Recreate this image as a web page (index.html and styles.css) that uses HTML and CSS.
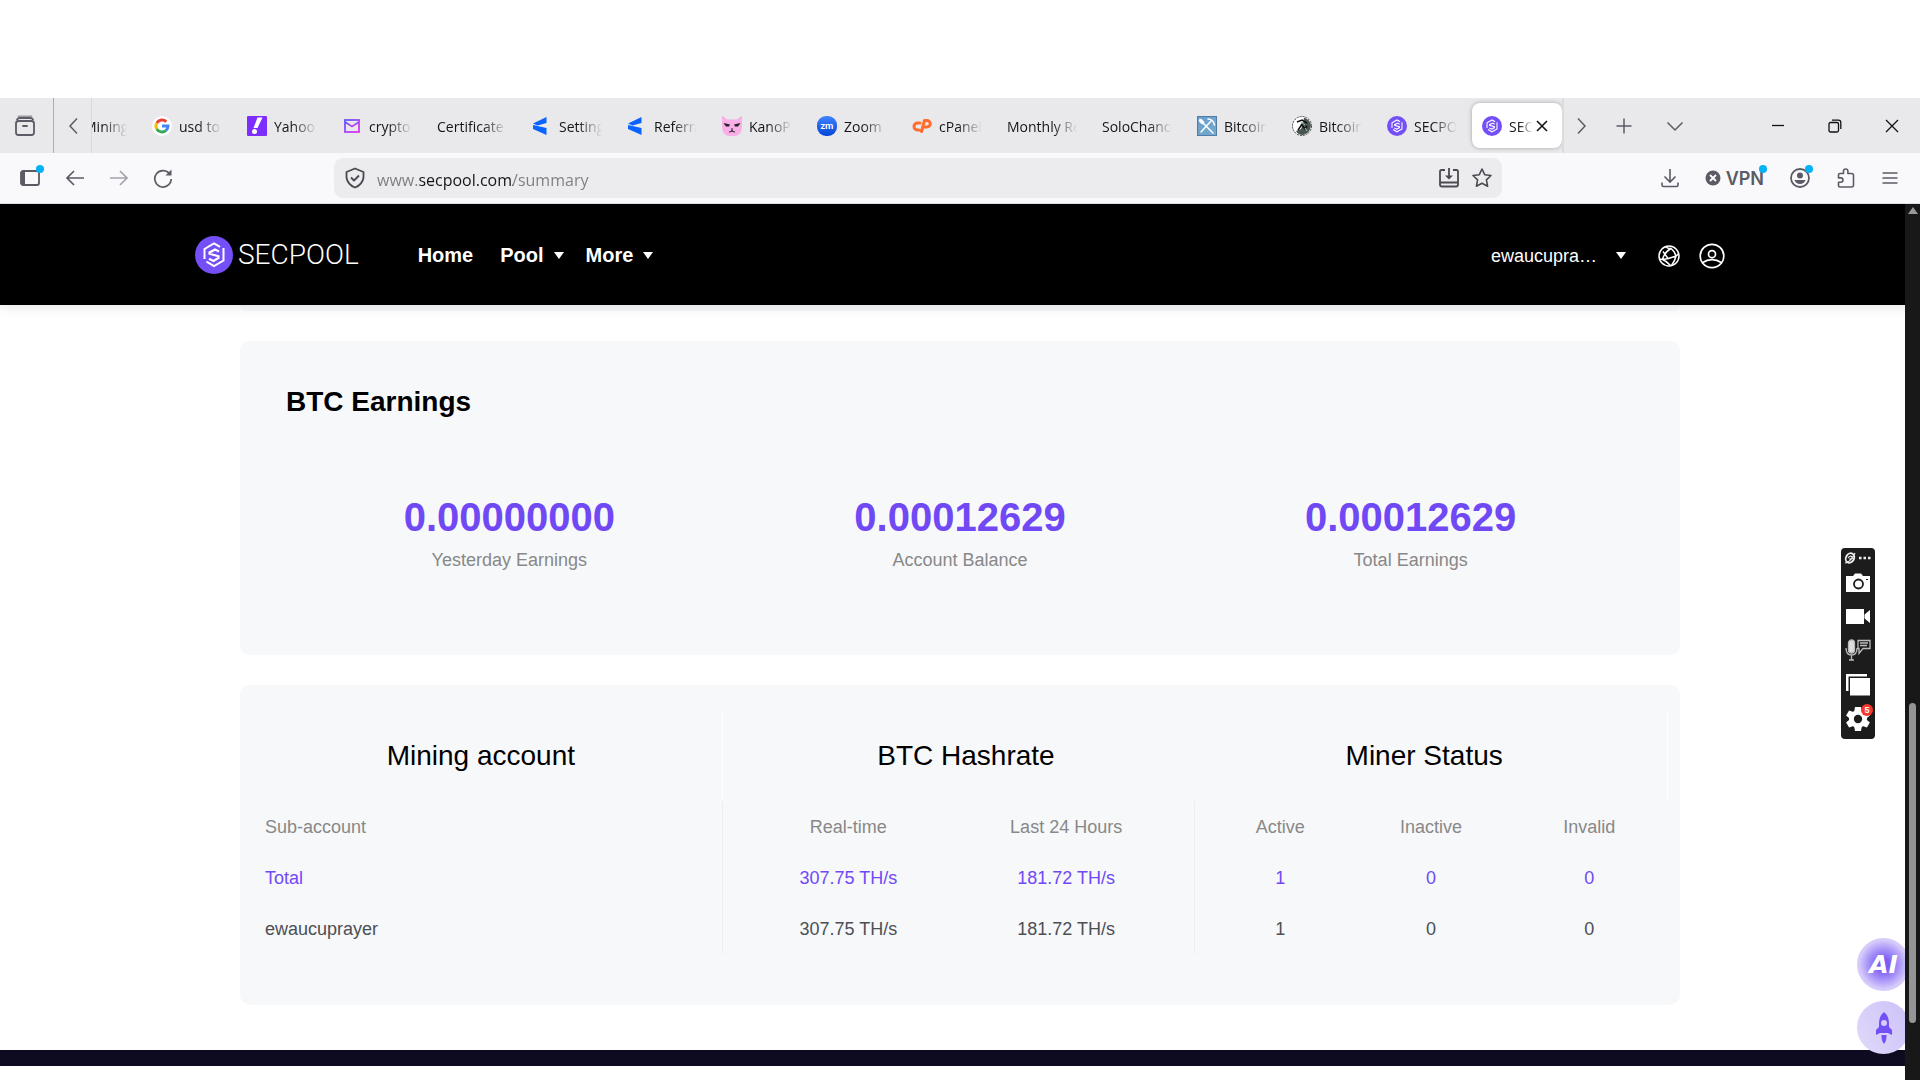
FILE: index.html
```html
<!DOCTYPE html>
<html lang="en">
<head>
  <meta charset="UTF-8" />
  <meta name="viewport" content="width=device-width, initial-scale=1.0"/>
  <title>SECPOOL - Summary</title>
  <link rel="stylesheet" href="styles.css">
</head>
<body>
  <!-- shared symbols -->
  <svg class="defs" width="0" height="0" aria-hidden="true">
    <defs>
      <linearGradient id="mailGrad" x1="0" y1="0" x2="1" y2="1">
        <stop offset="0" stop-color="#5b5bff"/><stop offset="1" stop-color="#e633f0"/>
      </linearGradient>
      <linearGradient id="zoomGrad" x1="0" y1="0" x2="0" y2="1">
        <stop offset="0" stop-color="#3f83ff"/><stop offset="1" stop-color="#0546d8"/>
      </linearGradient>
      <linearGradient id="pickGrad" x1="0" y1="0" x2="1" y2="1">
        <stop offset="0" stop-color="#6a9fd0"/><stop offset="1" stop-color="#75aacb"/>
      </linearGradient>
      <symbol id="secpool" viewBox="0 0 38 38">
        <circle cx="19" cy="19" r="19" fill="#744ff8"/>
        <g fill="none" stroke="#fff" stroke-width="2">
          <path d="M9.500 23V13L19 7.500l6 3.400M28.500 12v12.500L19 30l-7.500-4.400"/>
          <path d="M24 15.500l-4-2-5.500 3v1.200l9 2.600v1.700L18.500 25l-4.500-2.200" stroke-width="2.200"/>
        </g>
      </symbol>
      <symbol id="flag" viewBox="0 0 20 20">
        <path d="M1 7.500 14.500 1v6L5.500 9.500zM1 9l13.500 3v7L1 13z" fill="#0b63ff"/>
      </symbol>
    </defs>
  </svg>

  <div class="tabstrip">
    <button class="icon-btn view-btn" aria-label="Recent browsing">
      <svg width="22" height="22" viewBox="0 0 22 22" fill="none" stroke="#5b5b66" stroke-width="1.800" stroke-linecap="round"><path d="M4.500 1.500h13" stroke="#9a9aa3"/><path d="M3 4.500q1-1.500 3-1.500h10q2 0 3 1.500"/><rect x="2" y="6" width="18" height="14" rx="2.500"/><path d="M9 11h4"/></svg>
    </button>
    <button class="icon-btn scroll-btn" aria-label="Scroll left">
      <svg width="16" height="18" viewBox="0 0 16 18" fill="none" stroke="#5b5b66" stroke-width="1.500"><path d="M11 1.500 4 9l7 7.500"/></svg>
    </button>
    <div class="tabs">
      <button class="tab"><span class="fav"></span><span class="tab-text">Mining</span></button>
      <button class="tab">
        <svg class="fav" viewBox="0 0 20 20"><circle cx="10" cy="10" r="10" fill="#fff"/><g fill="none" stroke-width="3"><path d="M14.300 5.700A6 6 0 0 0 4.800 7" stroke="#ea4335"/><path d="M4.800 7a6 6 0 0 0 0 6" stroke="#fbbc05"/><path d="M4.800 13a6 6 0 0 0 9 1.600" stroke="#34a853"/><path d="M13.800 14.600A6 6 0 0 0 16 10h-6" stroke="#4285f4"/></g></svg>
        <span class="tab-text">usd to</span>
      </button>
      <button class="tab">
        <svg class="fav" viewBox="0 0 20 20"><rect width="20" height="20" rx="1" fill="#7d2eff"/><path d="M10.500 1.500h5L10.500 12h-4z" fill="#fff"/><circle cx="7.500" cy="15.500" r="2.500" fill="#fff"/></svg>
        <span class="tab-text">Yahoo</span>
      </button>
      <button class="tab">
        <svg class="fav" viewBox="0 0 20 20" fill="none" stroke="url(#mailGrad)" stroke-width="1.800"><rect x="3" y="4" width="14" height="12"/><path d="M3 6l7 4.500L17 6"/></svg>
        <span class="tab-text">crypto</span>
      </button>
      <button class="tab"><span class="tab-text">Certificate</span></button>
      <button class="tab"><svg class="fav"><use href="#flag"/></svg><span class="tab-text">Settings</span></button>
      <button class="tab"><svg class="fav"><use href="#flag"/></svg><span class="tab-text">Referral</span></button>
      <button class="tab">
        <svg class="fav" viewBox="0 0 20 20"><path d="M0 0q3 1 5 3.500h10Q17 1 20 0v10q0 9-7 10H7Q0 19 0 10z" fill="#f8aee6"/><path d="M1.500 7 8 8.500 7 10.500H4zM18.500 7 12 8.500l1 2h3z" fill="#222"/><path d="M9 13h2M7 16l2.500-.500.500-1.500.500 1.500 2.500.500" stroke="#222" fill="none"/></svg>
        <span class="tab-text">KanoPool</span>
      </button>
      <button class="tab">
        <svg class="fav" viewBox="0 0 20 20"><rect width="20" height="20" rx="9" fill="url(#zoomGrad)"/><text class="zm" x="10" y="13" text-anchor="middle">zm</text></svg>
        <span class="tab-text">Zoom</span>
      </button>
      <button class="tab">
        <svg class="fav" viewBox="0 0 20 20" fill="none" stroke="#ff6c2c" stroke-width="3" stroke-linecap="round" stroke-linejoin="round"><path d="M8 7H5.500a3.500 3.500 0 0 0 0 7H7M9.500 15.500 12.500 4.500H15a3.200 3.200 0 0 1 0 6.500h-2"/></svg>
        <span class="tab-text">cPanel</span>
      </button>
      <button class="tab"><span class="tab-text">Monthly Report</span></button>
      <button class="tab"><span class="tab-text">SoloChance</span></button>
      <button class="tab">
        <svg class="fav" viewBox="0 0 20 20"><rect x=".5" y=".5" width="19" height="19" fill="url(#pickGrad)" stroke="#4f7da8"/><g fill="none" stroke="#fff" stroke-width="1.500" stroke-linecap="round"><path d="M4 5l12 12M4 16 14 5"/><path d="M11 3q5 0 6.500 6"/><path d="M3.500 4.500l2 2" stroke-width="3.500"/></g></svg>
        <span class="tab-text">Bitcoin</span>
      </button>
      <button class="tab">
        <svg class="fav" viewBox="0 0 20 20"><circle cx="10" cy="10" r="9.500" fill="#fff" stroke="#444" stroke-dasharray="2 1"/><path d="M12 1.500q6 2 7 8-1 8-8 9.500-5 0-7-4l5-2 2-5z" fill="#4a5552"/><path d="M5 6l5-2 5 3M6 14l5-7M9 8l4 5 2-3" fill="none" stroke="#111" stroke-width="1.500"/><path d="M9 6l4 3M13 12l2 3" stroke="#8ad0a6"/></svg>
        <span class="tab-text">Bitcoin</span>
      </button>
      <button class="tab"><svg class="fav"><use href="#secpool"/></svg><span class="tab-text">SECPOOL</span></button>
      <button class="tab active">
        <svg class="fav"><use href="#secpool"/></svg><span class="tab-text">SECPOOL</span>
        <svg class="tab-close" viewBox="0 0 12 12" stroke="#15141a" stroke-width="1.600"><path d="M1 1l10 10M11 1 1 11"/></svg>
      </button>
    </div>
    <div class="tab-actions">
      <button class="icon-btn" aria-label="Scroll right"><svg width="16" height="18" viewBox="0 0 16 18" fill="none" stroke="#5b5b66" stroke-width="1.500"><path d="M4 1.500 11 9l-7 7.500"/></svg></button>
      <button class="icon-btn new-tab" aria-label="New tab"><svg width="16" height="16" viewBox="0 0 16 16" stroke="#5b5b66" stroke-width="1.500"><path d="M8 .500v15M.500 8h15"/></svg></button>
      <button class="icon-btn" aria-label="List all tabs"><svg width="18" height="16" viewBox="0 0 18 16" fill="none" stroke="#5b5b66" stroke-width="1.500"><path d="M1.500 4.500 9 12l7.500-7.500"/></svg></button>
    </div>
    <div class="window-actions">
      <button class="icon-btn" aria-label="Minimize"><svg width="14" height="14" viewBox="0 0 14 14" stroke="#111" stroke-width="1.300"><path d="M1 6.500h12"/></svg></button>
      <button class="icon-btn" aria-label="Restore"><svg width="14" height="14" viewBox="0 0 14 14" fill="none" stroke="#111" stroke-width="1.300"><rect x="1" y="3.500" width="9.500" height="9.500" rx="1.500"/><path d="M4 1.200h6.500q2.300 0 2.300 2.300V10"/></svg></button>
      <button class="icon-btn" aria-label="Close"><svg width="14" height="14" viewBox="0 0 14 14" stroke="#111" stroke-width="1.300"><path d="M1 1l12 12M13 1 1 13"/></svg></button>
    </div>
  </div>

  <div class="toolbar">
    <div class="nav-btns">
      <button class="icon-btn dotted" aria-label="Sidebar"><svg width="22" height="18" viewBox="0 0 22 18" fill="none" stroke="#5b5b66" stroke-width="1.800"><rect x="2" y="2" width="18" height="14" rx="2"/><path d="M4 3v12" stroke-width="4"/></svg></button>
      <button class="icon-btn" aria-label="Back"><svg width="20" height="18" viewBox="0 0 20 18" fill="none" stroke="#5b5b66" stroke-width="1.700"><path d="M9 2 2 9l7 7M2 9h17"/></svg></button>
      <button class="icon-btn" aria-label="Forward" disabled><svg width="20" height="18" viewBox="0 0 20 18" fill="none" stroke="#a3a3aa" stroke-width="1.700"><path d="M11 2l7 7-7 7M18 9H1"/></svg></button>
      <button class="icon-btn" aria-label="Reload"><svg width="20" height="20" viewBox="0 0 20 20" fill="none" stroke="#5b5b66" stroke-width="1.700"><path d="M17 6.500A8.200 8.200 0 1 0 18.200 11"/><path d="M18.500 1.500v6h-6z" fill="#5b5b66" stroke="none"/></svg></button>
    </div>
    <div class="urlbar">
      <svg width="20" height="22" viewBox="0 0 20 22" fill="none" stroke="#4a4a52" stroke-width="1.800" stroke-linejoin="round"><path d="M10 1.500 18.500 5v5.500q-1 7-8.500 10Q2.500 17.500 1.500 10.500V5z"/><path d="M6 10.500l3 3 5-5"/></svg>
      <input class="url" type="text" aria-label="Address" value="www.secpool.com/summary">
      <button class="icon-btn" aria-label="Install site"><svg width="22" height="20" viewBox="0 0 22 20" fill="none" stroke="#4a4a52" stroke-width="1.800"><path d="M7 2H3.500Q2 2 2 3.500v13Q2 18.500 4 18.500h14q2 0 2-2v-13Q20 2 18.500 2H15M2 14.500h18M11 0v9"/><path d="M7 7.500h8l-4 4z" fill="#4a4a52" stroke="none"/></svg></button>
      <button class="icon-btn" aria-label="Bookmark"><svg width="20" height="20" viewBox="0 0 20 20" fill="none" stroke="#4a4a52" stroke-width="1.600" stroke-linejoin="round"><path d="M10 1l2.700 5.700 6.300.8-4.600 4.300 1.200 6.400-5.600-3-5.600 3 1.200-6.400L1 7.500l6.300-.8z"/></svg></button>
    </div>
    <div class="tool-btns">
      <button class="icon-btn" aria-label="Downloads"><svg width="18" height="20" viewBox="0 0 18 20" fill="none" stroke="#5b5b66" stroke-width="1.600"><path d="M9 1v13M3.500 8.500 9 14l5.500-5.500M1 14.500V17q0 1.500 1.500 1.500h13Q17 18.500 17 17v-2.500"/></svg></button>
      <button class="icon-btn vpn dotted"><svg width="16" height="16" viewBox="0 0 16 16"><circle cx="8" cy="8" r="7.500" fill="#5b5b66"/><path d="M5 5l6 6M11 5l-6 6" stroke="#fff" stroke-width="1.800"/></svg>VPN</button>
      <button class="icon-btn dotted" aria-label="Account"><svg width="20" height="20" viewBox="0 0 20 20"><circle cx="10" cy="10" r="9" fill="none" stroke="#5b5b66" stroke-width="1.800"/><circle cx="10" cy="7.500" r="3" fill="#5b5b66"/><path d="M4.500 12h11q-1.500 4-5.500 4t-5.500-4z" fill="#5b5b66"/></svg></button>
      <button class="icon-btn" aria-label="Extensions"><svg width="20" height="20" viewBox="0 0 20 20" fill="none" stroke="#5b5b66" stroke-width="1.600" stroke-linejoin="round"><path d="M7.500 5.500V3.200a2.200 2.200 0 0 1 4.400 0v2.300h3.600q2 0 2 2V17q0 2-2 2H4q-1.500 0-1.500-1.500v-3.300h2.300a2.100 2.100 0 0 0 0-4.300H2.500V7q0-1.500 1.500-1.500z"/></svg></button>
      <button class="icon-btn" aria-label="Menu"><svg width="16" height="14" viewBox="0 0 16 14" stroke="#5b5b66" stroke-width="1.500"><path d="M.500 2h15M.500 7h15M.500 12h15"/></svg></button>
    </div>
  </div>

  <div class="page">
    <header class="site-header">
      <div class="header-inner">
        <a class="logo" href="#"><svg width="38" height="38"><use href="#secpool"/></svg>SECPOOL</a>
        <nav class="site-nav">
          <a href="#">Home</a>
          <button>Pool<i class="caret"></i></button>
          <button>More<i class="caret"></i></button>
        </nav>
        <div class="user-area">
          <label class="account">
            <select aria-label="Sub-account"><option>ewaucupra…</option></select>
            <i class="caret"></i>
          </label>
          <button class="icon-btn" aria-label="Language"><svg width="22" height="22" viewBox="0 0 22 22" fill="none" stroke="#fff" stroke-width="1.500"><circle cx="11" cy="11" r="10"/><path d="M7.500 2q3 2 6 1.500M13 3.500Q6.500 7 4.500 14.500M13 3.500q4 3 5 8M1 14l3.500.500 6-1 7.500-2.500L20.500 9M4.500 14.500q4 1.500 8 6M18 11q-1 5-4.500 9.500M10 13.500 5 6.500"/></svg></button>
          <button class="icon-btn" aria-label="Profile"><svg width="26" height="26" viewBox="0 0 26 26" fill="none" stroke="#fff" stroke-width="1.700"><circle cx="13" cy="11.200" r="3.500"/><path d="M3.800 20.500a11.800 11.800 0 1 1 18.400 0M3.800 19.500q4-2.800 9.200-2.800t9.200 2.800M3.800 20.200a11.800 11.800 0 0 0 18.400 0"/></svg></button>
        </div>
      </div>
    </header>

    <main class="content">
      <div class="card card-end"></div>

      <section class="card earnings">
        <h2>BTC Earnings</h2>
        <div class="stats">
          <div class="stat"><strong>0.00000000</strong><span>Yesterday Earnings</span></div>
          <div class="stat"><strong>0.00012629</strong><span>Account Balance</span></div>
          <div class="stat"><strong>0.00012629</strong><span>Total Earnings</span></div>
        </div>
      </section>

      <section class="card mining">
        <table>
          <colgroup>
            <col class="col-account"><col class="col-real"><col class="col-day">
            <col class="col-active"><col class="col-inactive"><col class="col-invalid">
          </colgroup>
          <thead>
            <tr class="groups">
              <th class="line">Mining account</th>
              <th class="group-rate" colspan="2">BTC Hashrate</th>
              <th class="line group-status" colspan="3">Miner Status</th>
            </tr>
            <tr class="labels">
              <th class="name line">Sub-account</th><th>Real-time</th><th class="day line">Last 24 Hours</th>
              <th>Active</th><th>Inactive</th><th class="last">Invalid</th>
            </tr>
          </thead>
          <tbody>
            <tr class="total">
              <td class="name line">Total</td><td>307.75 TH/s</td><td class="day line">181.72 TH/s</td>
              <td>1</td><td>0</td><td class="last">0</td>
            </tr>
            <tr>
              <td class="name line">ewaucuprayer</td><td>307.75 TH/s</td><td class="day line">181.72 TH/s</td>
              <td>1</td><td>0</td><td class="last">0</td>
            </tr>
          </tbody>
        </table>
      </section>
    </main>

    <footer class="site-footer"></footer>

    <div class="floaters">
      <button class="ai-btn">AI</button>
      <button class="rocket-btn" aria-label="Back to top">
        <svg width="18" height="32" viewBox="0 0 18 32" fill="#7350f5"><path fill-rule="evenodd" d="M9 0q5 4 5 11v4l3 3v5l-4-2H5l-4 2v-5l3-3v-4q0-7 5-11zm0 8a3 3 0 1 0 0 6 3 3 0 0 0 0-6z"/><path d="M6.500 23h5q.5 5-2.500 9-3-4-2.500-9z"/></svg>
      </button>
    </div>

    <div class="scrollbar"><i class="arrow"></i><i class="thumb"></i></div>
  </div>

  <!-- floating recorder -->
  <div class="recorder">
    <svg width="28" height="12" viewBox="0 0 28 12" fill="none" stroke="#eee"><ellipse cx="6" cy="6" rx="4" ry="5" transform="rotate(30 6 6)" stroke-width="1.800"/><path d="M1 11Q7 10 11 1M4 6q2-3 4-1t-3 2" stroke-width="1.200"/><path d="M15 6h2.500M19.500 6H22M24 6h2.500" stroke-width="2.500"/></svg>
    <button class="icon-btn" aria-label="Screenshot"><svg width="26" height="20" viewBox="0 0 26 20"><path d="M1 3h7l2-2.500h6L18 3h7v16H1z" fill="#fff"/><circle cx="13.500" cy="11" r="4.500" fill="none" stroke="#1c1c1c" stroke-width="1.800"/><path d="M21 6.500h2" stroke="#1c1c1c"/></svg></button>
    <button class="icon-btn" aria-label="Record video"><svg width="26" height="20" viewBox="0 0 26 20" fill="#fff"><path d="M1 3h18v15H1zM19.500 8.500 25 4v13l-5.500-4.500z"/></svg></button>
    <button class="icon-btn" aria-label="Voice notes"><svg width="26" height="22" viewBox="0 0 26 22" fill="none" stroke="#bbb" stroke-width="1.300"><rect x="3.500" y="1" width="6" height="13" rx="3" fill="#ddd"/><path d="M1 9q0 7 5.500 7T12 9M6.500 16v5M4 21h5M13 1.500h12v8h-7l-4 5v-5h-1zM15 4h8M15 6.500h7"/></svg></button>
    <button class="icon-btn" aria-label="Gallery"><svg width="26" height="22" viewBox="0 0 26 22" fill="#fff"><path d="M1 0h21v2.500H3.500V17H1z"/><path d="M5 4h20v17.500H5z"/></svg></button>
    <button class="icon-btn gear" aria-label="Settings"><svg width="26" height="26" viewBox="0 0 26 26"><g fill="#fff"><circle cx="13" cy="13" r="9"/><path id="tooth" d="M10 1h6l1 6H9zM10 25h6l1-6H9z"/><use href="#tooth" transform="rotate(60 13 13)"/><use href="#tooth" transform="rotate(120 13 13)"/></g><circle cx="13" cy="13" r="4.200" fill="#1c1c1c"/></svg><span class="badge">5</span></button>
  </div>
</body>
</html>
```
FILE: styles.css
```css
* {
  box-sizing: border-box;
}

body {
  margin: 0;
  min-height: 100vh;
  padding-top: 98px;
  display: flex;
  flex-direction: column;
  position: relative;
  overflow: hidden;
  background: #fff;
  font-family: "Liberation Sans", Arial, sans-serif;
}

button,
select,
input {
  border: none;
  padding: 0;
  background: none;
  font: inherit;
  color: inherit;
}

button {
  cursor: pointer;
}

.defs {
  position: absolute;
}

.icon-btn {
  display: flex;
  align-items: center;
  justify-content: center;
  position: relative;
  flex: none;
}

/* browser tabs */
.tabstrip {
  height: 55px;
  display: flex;
  background: #e9e9eb;
  font-family: "Open Sans", "Segoe UI", sans-serif;
  font-size: 14px;
  color: #15141a;
}

.view-btn {
  width: 54px;
  border-right: 1px solid #aeaeb3;
  padding-right: 4px;
}

.scroll-btn {
  width: 37px;
  padding-left: 3px;
}

.tabs {
  flex: 1;
  min-width: 0;
  display: flex;
  justify-content: flex-end;
  gap: 5px;
  padding: 5px 0;
  overflow: hidden;
  border-left: 1px solid #d9d9dc;
  border-right: 2px solid #dcdcdf;
}

.tab {
  width: 90px;
  flex: none;
  display: flex;
  align-items: center;
  gap: 7px;
  padding: 0 10px;
  border-radius: 8px;
}

.tab.active {
  background: #fff;
  box-shadow: 0 0 4px rgba(0, 0, 0, 0.3);
}

.fav {
  width: 20px;
  height: 20px;
  flex: none;
}

.zm {
  font: bold 10px Lato, sans-serif;
  fill: #fff;
}

.tab-text {
  flex: 1;
  min-width: 0;
  padding-top: 1px;
  overflow: hidden;
  white-space: nowrap;
  text-align: left;
  mask-image: linear-gradient(to left, transparent, #000 24px);
}

.tab.active .tab-text {
  mask-image: linear-gradient(to left, transparent, #000 14px);
}

.tab-close {
  width: 12px;
  height: 12px;
  flex: none;
  margin: 0 4px 0 -4px;
}

.tab-actions {
  width: 184px;
  display: flex;
  gap: 26px;
  padding-left: 10px;
}

.new-tab {
  margin-right: 8px;
}

.window-actions {
  display: flex;
  gap: 43px;
  padding: 0 21px 0 23px;
}

/* browser toolbar */
.toolbar {
  height: 51px;
  display: grid;
  grid-template-columns: 334px 1fr 418px;
  align-items: center;
  background: #f9f9fb;
  border-bottom: 1px solid #e0e0e4;
}

.nav-btns {
  display: flex;
  gap: 24px;
  padding-left: 19px;
}

.urlbar {
  height: 40px;
  display: flex;
  align-items: center;
  gap: 12px;
  padding: 0 10px 0 11px;
  border-radius: 9px;
  background: #ececee;
}

/* only the domain part is dark */
.url {
  flex: 1;
  min-width: 0;
  height: 40px;
  padding-top: 3px;
  font-family: "Open Sans", "Segoe UI", sans-serif;
  font-size: 16px;
  color: transparent;
  background: linear-gradient(90deg, #7c7c82 41px, #15141a 41px, #15141a 136px, #7c7c82 136px);
  background-clip: text;
}

.tool-btns {
  display: flex;
  justify-content: flex-end;
  align-items: center;
  gap: 26px;
  padding-right: 22px;
}

.vpn {
  gap: 5px;
  font-family: Inter, sans-serif;
  font-size: 18px;
  font-weight: 600;
  color: #5b5b66;
}

.dotted::after {
  content: "";
  position: absolute;
  top: -3px;
  right: -3px;
  width: 8px;
  height: 8px;
  border-radius: 50%;
  background: #00b3f4;
}

/* site */
.page {
  flex: 1;
  position: relative;
  display: flex;
  flex-direction: column;
  overflow: hidden;
}

.site-header {
  position: relative;
  background: #000;
  color: #fff;
  box-shadow: 0 2px 12px rgba(0, 0, 0, 0.1);
  z-index: 1;
}

.header-inner {
  height: 101px;
  max-width: 1530px;
  margin: 0 auto;
  display: flex;
  align-items: center;
}

.logo {
  display: flex;
  align-items: center;
  gap: 5px;
  color: #fff;
  text-decoration: none;
  font-family: Roboto, sans-serif;
  font-size: 28px;
  font-weight: 300;
}

.site-nav {
  display: flex;
  gap: 27px;
  margin-left: 59px;
  padding-top: 2px;
  font-size: 20px;
  font-weight: bold;
}

.site-nav a {
  color: #fff;
  text-decoration: none;
}

.site-nav button {
  display: flex;
  align-items: center;
  gap: 10px;
  margin-right: -5px;
}

.caret {
  border: 5px solid transparent;
  border-top: 7px solid #fff;
  border-bottom: none;
}

.user-area {
  margin-left: auto;
  padding-top: 2px;
  display: flex;
  align-items: center;
  gap: 19px;
}

.account {
  display: flex;
  align-items: center;
  gap: 18px;
  margin-right: 13px;
  font-size: 18px;
}

.account select {
  appearance: none;
}

.account option {
  color: #000;
}

.content {
  width: 100%;
  max-width: 1440px;
  margin: 0 auto;
  display: flex;
  flex-direction: column;
  gap: 30px;
}

.card {
  border-radius: 10px;
  background: #f7f8fa;
}

.card-end {
  height: 6px;
  border-radius: 0 0 10px 10px;
}

.earnings {
  padding: 45px 44px 83px;
}

.earnings h2 {
  margin: 0 0 75px;
  padding-left: 2px;
  font-size: 28px;
  line-height: 32px;
}

.stats {
  display: grid;
  grid-template-columns: repeat(3, 1fr);
}

.stat {
  display: flex;
  flex-direction: column;
  align-items: center;
  gap: 7px;
}

.stat strong {
  font-size: 40px;
  line-height: 48px;
  color: #7049f5;
}

.stat span {
  font-size: 18px;
  line-height: 24px;
  color: #888;
}

.mining {
  padding: 25px 12px 51px 0;
}

.mining table {
  width: 100%;
  table-layout: fixed;
  border-collapse: separate;
  border-spacing: 0;
  font-size: 18px;
  color: #4c4f55;
}

.col-account { width: 33.8%; }
.col-real { width: 17.6%; }
.col-day { width: 15.5%; }
.col-active { width: 11.9%; }
.col-inactive { width: 9.2%; }
.col-invalid { width: 12%; }

.mining th,
.mining td {
  height: 51px;
  padding: 2px 0 0;
  font-weight: normal;
  text-align: center;
}

.mining .groups th {
  height: 91px;
  padding-top: 0;
  font-size: 28px;
  color: #000;
}

.mining .line {
  border-right: 1px solid #ebedf0;
}

.mining .groups .line {
  border-right-color: #fff;
}

.mining .labels th {
  color: #888;
}

.mining .name {
  padding-left: 25px;
  text-align: left;
}

.mining .day {
  padding-right: 36px;
}

.mining .last,
.mining .group-rate {
  padding-left: 14px;
}

.mining .group-status {
  padding-right: 14px;
}

.total {
  color: #7049f5;
}

.site-footer {
  height: 16px;
  margin-top: 45px;
  background: #0e0a1f;
}

/* things that float over the page */
.floaters {
  position: absolute;
  right: 10px;
  bottom: 26px;
  z-index: 1;
  display: flex;
  flex-direction: column;
  align-items: center;
  gap: 10px;
}

.ai-btn,
.rocket-btn {
  display: flex;
  align-items: center;
  justify-content: center;
  width: 53px;
  height: 53px;
  border-radius: 50%;
}

.ai-btn {
  background: radial-gradient(circle, #7d5cf5 15%, #a995f8 42%, #d6cbfb 65%);
  color: #fff;
  font: italic 900 25px "DejaVu Sans", sans-serif;
}

.rocket-btn {
  background: linear-gradient(60deg, #e0daf9, #cdc0f9);
}

.scrollbar {
  position: absolute;
  top: 0;
  right: 0;
  bottom: 0;
  z-index: 2;
  width: 15px;
  background: #181818;
}

.arrow {
  position: absolute;
  top: 3px;
  left: 3px;
  border: 5px solid transparent;
  border-bottom: 7px solid #999;
  border-top: none;
}

.thumb {
  position: absolute;
  top: 57%;
  bottom: 57px;
  left: 4px;
  width: 7px;
  border-radius: 4px;
  background: #959595;
}

.recorder {
  position: absolute;
  top: 548px;
  right: 45px;
  z-index: 3;
  width: 34px;
  display: flex;
  flex-direction: column;
  align-items: center;
  gap: 13px;
  padding: 4px 0 7px;
  border-radius: 4px;
  background: #1c1c1c;
}

.recorder > svg {
  margin-bottom: -4px;
}

.recorder .gear {
  margin-top: -3px;
}

.badge {
  position: absolute;
  top: -2px;
  right: -2px;
  width: 12px;
  height: 12px;
  border-radius: 50%;
  background: #f5372c;
  color: #fff;
  font-size: 9px;
  font-weight: bold;
  line-height: 12px;
}
```
